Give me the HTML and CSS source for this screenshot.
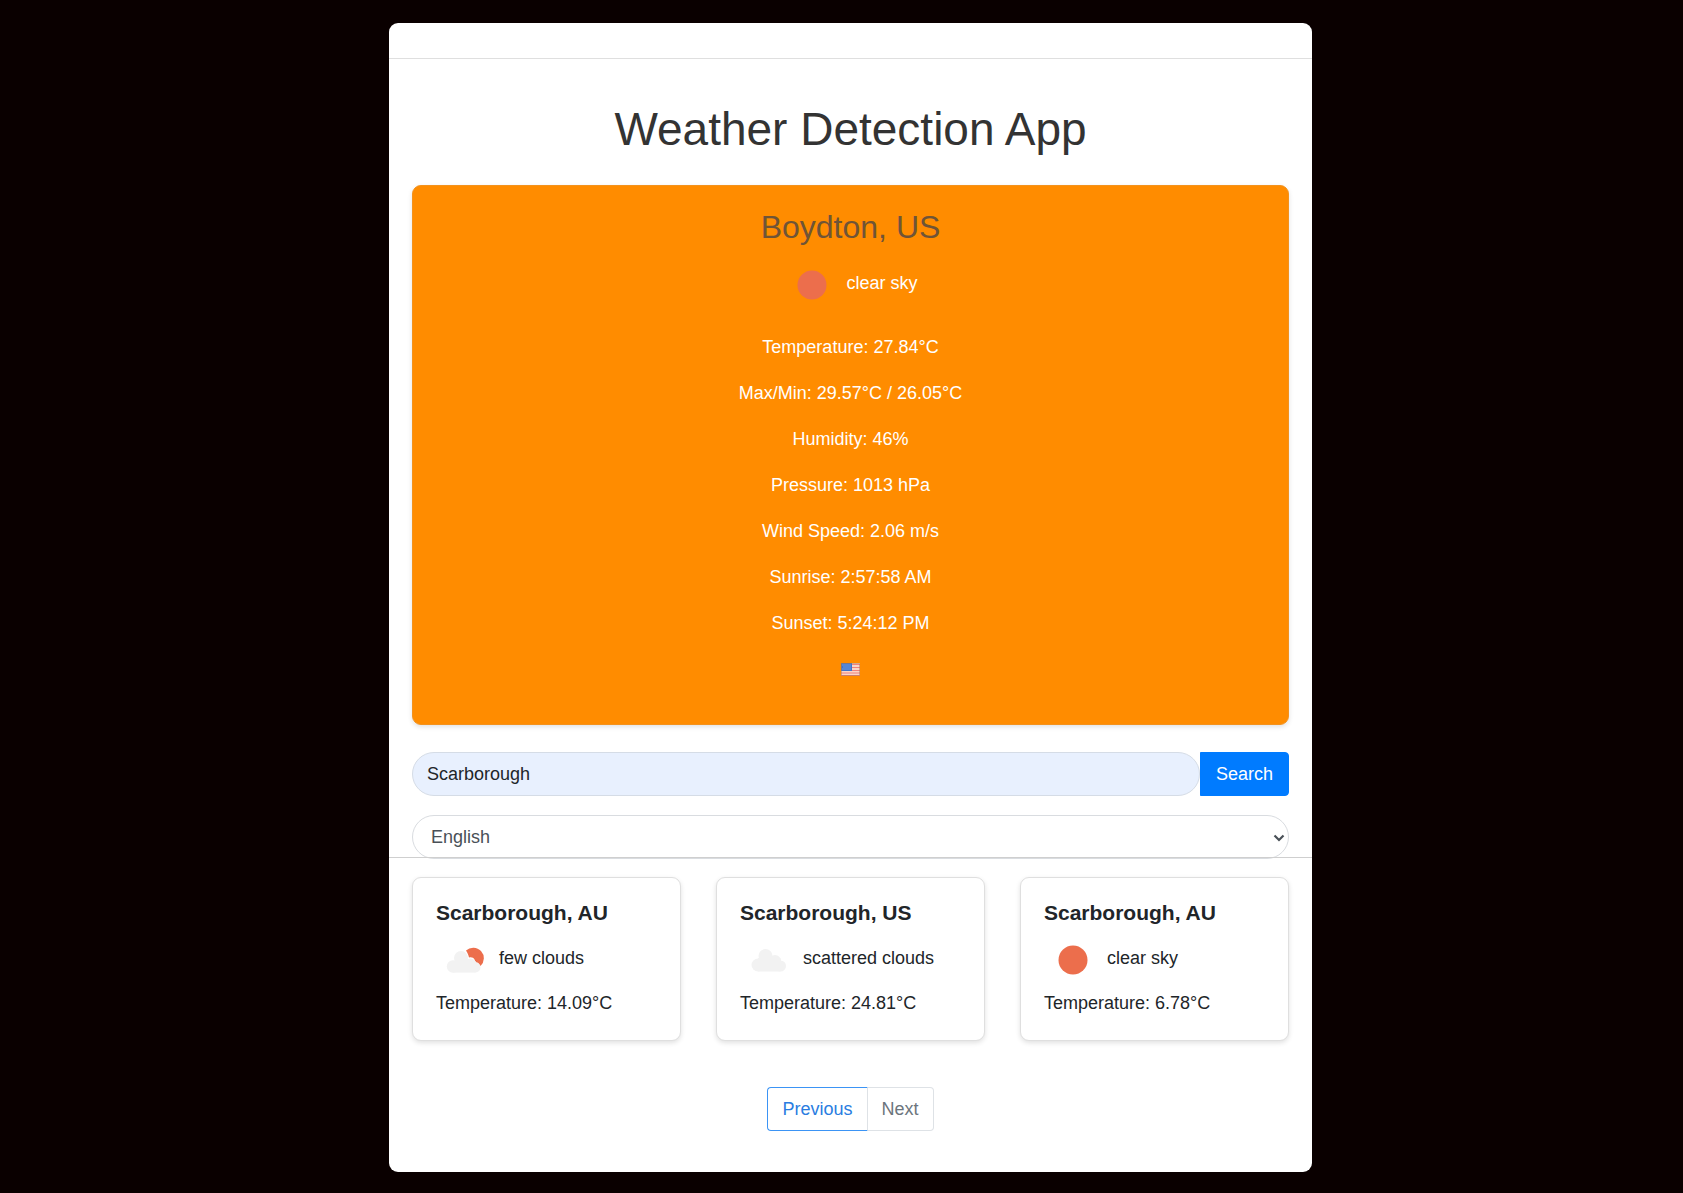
FILE: index.html
```html
<!DOCTYPE html>
<html lang="en">
<head>
  <meta charset="utf-8">
  <meta name="viewport" content="width=device-width, initial-scale=1">
  <title>Weather Detection App</title>
  <link rel="stylesheet" href="styles.css">
</head>
<body>
  <svg class="symbols" aria-hidden="true">
    <symbol id="sun" viewBox="0 0 58 58">
      <circle cx="29" cy="31" r="14.5" fill="#ec6e4c"/>
    </symbol>
    <symbol id="cloud" viewBox="0 0 58 58">
      <g fill="#f2f2f2">
        <circle cx="18" cy="36" r="6.500"/>
        <circle cx="25.500" cy="27" r="7"/>
        <circle cx="35" cy="32" r="6"/>
        <circle cx="40.500" cy="37" r="5.500"/>
        <rect x="18" y="29" width="22.500" height="13.500"/>
      </g>
    </symbol>
    <symbol id="few-clouds" viewBox="0 0 58 58">
      <path d="M30 21.500A10.500 10.500 0 1 1 44.500 37C43.500 35.500 43 34 41 33.500C39.500 33.500 39 32 38.500 30.500C37.500 28.500 35.500 28 33 28.500C32.500 26 31.500 24 30 21.500Z" fill="#ec6e4c"/>
      <g fill="#f2f2f2">
        <circle cx="17" cy="37.500" r="6.200"/>
        <circle cx="25" cy="29" r="7"/>
        <circle cx="34.500" cy="35" r="5.500"/>
        <circle cx="39.500" cy="38.500" r="5"/>
        <rect x="17" y="32" width="22.500" height="11.600"/>
      </g>
    </symbol>
  </svg>

  <main class="panel">
    <header class="panel-header"></header>

    <section class="overview">
      <h1 class="title">Weather Detection App</h1>

      <article class="current">
        <h2 class="current-city">Boydton, US</h2>
        <div class="condition">
          <svg class="icon" aria-hidden="true"><use href="#sun"/></svg>
          <span>clear sky</span>
        </div>
        <div class="readings">
          <p>Temperature: 27.84°C</p>
          <p>Max/Min: 29.57°C / 26.05°C</p>
          <p>Humidity: 46%</p>
          <p>Pressure: 1013 hPa</p>
          <p>Wind Speed: 2.06 m/s</p>
          <p>Sunrise: 2:57:58 AM</p>
          <p>Sunset: 5:24:12 PM</p>
          <p class="flag-row">
            <svg class="flag" viewBox="0 0 19 13" role="img" aria-label="United States">
              <rect width="19" height="13" fill="#fbd5c8"/>
              <path d="M0 1.500H19M0 4.500H19M0 7.500H19M0 10H19M0 12.500H19" stroke="#f0827c" stroke-width="1"/>
              <rect width="11" height="8" fill="#3f74cc"/>
              <path d="M1.500 2H10M2.500 4H10M1.500 6H10" stroke="#9bbdf0" stroke-width="1" stroke-dasharray="1 1"/>
              <rect x=".5" y=".5" width="18" height="12" fill="none" stroke="#a6785a" stroke-opacity=".5"/>
            </svg>
          </p>
        </div>
      </article>

      <form class="search">
        <div class="search-row">
          <input class="search-input" type="text" value="Scarborough" aria-label="City">
          <button class="search-button" type="button">Search</button>
        </div>
        <div class="language">
          <select class="language-select" aria-label="Language">
            <option>English</option>
          </select>
          <svg class="chevron" viewBox="0 0 12 8" aria-hidden="true"><path d="M1.500 1.500L6 6L10.500 1.500" fill="none" stroke="#495057" stroke-width="2.200"/></svg>
        </div>
      </form>
    </section>

    <section class="results">
      <div class="cards">
        <article class="card">
          <h3 class="card-city">Scarborough, AU</h3>
          <div class="condition">
            <svg class="icon" aria-hidden="true"><use href="#few-clouds"/></svg>
            <span>few clouds</span>
          </div>
          <p class="card-temp">Temperature: 14.09°C</p>
        </article>
        <article class="card">
          <h3 class="card-city">Scarborough, US</h3>
          <div class="condition">
            <svg class="icon" aria-hidden="true"><use href="#cloud"/></svg>
            <span>scattered clouds</span>
          </div>
          <p class="card-temp">Temperature: 24.81°C</p>
        </article>
        <article class="card">
          <h3 class="card-city">Scarborough, AU</h3>
          <div class="condition">
            <svg class="icon" aria-hidden="true"><use href="#sun"/></svg>
            <span>clear sky</span>
          </div>
          <p class="card-temp">Temperature: 6.78°C</p>
        </article>
      </div>

      <nav class="pager" aria-label="Result pages">
        <button class="page-button page-previous" type="button">Previous</button>
        <button class="page-button page-next" type="button" disabled>Next</button>
      </nav>
    </section>
  </main>
</body>
</html>
```

FILE: styles.css
```css
*,
*::before,
*::after {
  box-sizing: border-box;
}

body {
  margin: 0;
  padding: 23px 0 22px 18px;
  background: #0a0000;
  color: #212529;
  font: 18px/28px "Liberation Sans", Arial, sans-serif;
}

h1, h2, h3, p {
  margin: 0;
}

input, select, button {
  margin: 0;
  font: inherit;
}

.symbols {
  display: none;
}

.panel {
  max-width: 923px;
  margin: 0 auto;
  background: #fff;
  border-radius: 9px;
}

.panel-header {
  padding-top: 35px;
  border-bottom: 1px solid #dfdfdf;
}

.overview {
  padding: 42px 23px 0;
}

.title {
  margin-bottom: 28px;
  color: #333;
  font-size: 46px;
  line-height: 56px;
  font-weight: 400;
  text-align: center;
}

.current {
  display: flex;
  flex-direction: column;
  align-items: center;
  padding: 22px 23px 40px;
  background: #ff8c00;
  border: 1px solid #f3921d;
  border-radius: 9px;
  box-shadow: 0 2px 5px rgba(0, 0, 0, 0.12);
  color: #fff;
  text-align: center;
}

.current-city {
  margin-bottom: 8px;
  color: #6f5437;
  font-size: 32px;
  line-height: 38px;
  font-weight: 400;
}

.condition {
  display: flex;
  align-items: center;
  gap: 5px;
}

.icon {
  flex: none;
  width: 58px;
  height: 58px;
}

.readings {
  display: flex;
  flex-direction: column;
  gap: 18px;
  margin-top: 21px;
}

.flag-row {
  display: flex;
  align-items: center;
  justify-content: center;
  height: 29px;
}

.flag {
  width: 19px;
  height: 13px;
}

.search {
  display: flex;
  flex-direction: column;
  gap: 19px;
  margin-top: 27px;
}

.search-row {
  display: flex;
}

.search-input {
  flex: 1;
  min-width: 0;
  height: 44px;
  padding: 0 14px;
  background: #e8f0fe;
  border: 1px solid #d5dce6;
  border-radius: 22px;
  color: #212529;
}

.search-button {
  height: 44px;
  padding: 0 15px;
  background: #007bff;
  border: 1px solid #007bff;
  border-radius: 0 4px 4px 0;
  color: #fff;
}

.language {
  position: relative;
}

.language-select {
  display: block;
  width: 100%;
  height: 44px;
  padding: 0 18px;
  appearance: none;
  background: #fff;
  border: 1px solid #d9dce0;
  border-radius: 22px;
  color: #495057;
}

.chevron {
  position: absolute;
  top: 19px;
  right: 4px;
  width: 12px;
  height: 8px;
  pointer-events: none;
}

/* The divider runs along the lower edge of the language field. */
.results {
  position: relative;
  margin-top: -2px;
  padding: 19px 23px 41px;
  border-top: 1px solid #cfcfcf;
}

.cards {
  display: grid;
  grid-template-columns: repeat(3, 1fr);
  gap: 35px;
}

.card {
  padding: 22px 23px 23px;
  background: #fff;
  border: 1px solid #dfdfdf;
  border-radius: 9px;
  box-shadow: 0 2px 5px rgba(0, 0, 0, 0.12);
}

.card-city {
  margin-bottom: 3px;
  font-size: 21px;
  line-height: 26px;
  font-weight: 700;
}

.card-temp {
  margin-top: 2px;
}

.pager {
  display: flex;
  justify-content: center;
  margin-top: 46px;
}

.page-button {
  height: 44px;
  padding: 0 14px;
  background: #fff;
  border: 1px solid #dee2e6;
}

.page-previous {
  border-color: #3b94f5;
  border-right-color: #dee2e6;
  border-radius: 4px 0 0 4px;
  color: #2a7de1;
}

.page-next {
  border-left: 0;
  border-radius: 0 4px 4px 0;
  color: #6c757d;
}
```
